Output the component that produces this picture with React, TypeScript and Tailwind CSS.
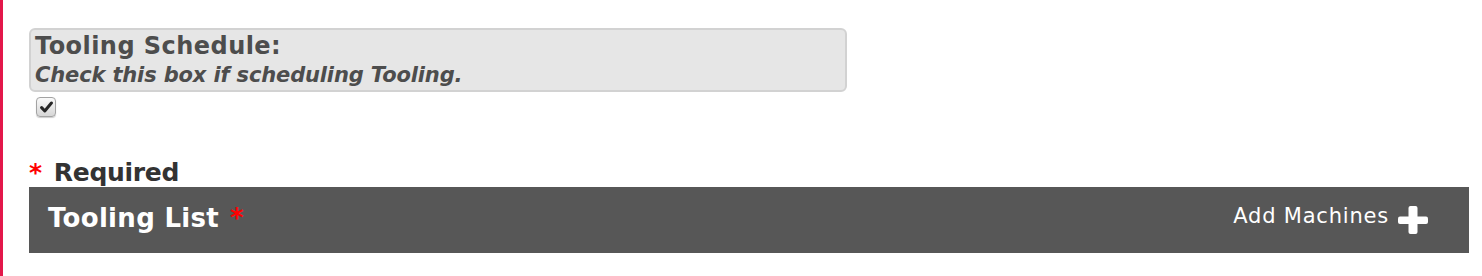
import { useState } from "react";

const PlusIcon = () => (
  <svg width="30" height="28" viewBox="0 0 30 28" className="block">
    <rect x="0" y="10.5" width="30" height="7.5" rx="2" fill="#ffffff" />
    <rect x="10.5" y="0" width="9" height="28" rx="2" fill="#ffffff" />
  </svg>
);

const App = () => {
  const [checked, setChecked] = useState(true);

  return (
    <div className="min-h-[276px] border-l-[3px] border-[#e3174a] bg-white pl-[26px] pr-[13px] pt-[28px] font-['DejaVu_Sans','Verdana',sans-serif]">
      {/* Tooling Schedule */}
      <div className="w-[818px] rounded-[6px] border-2 border-[#d2d2d2] bg-[#e6e6e6] px-[4px] pt-[2px] text-[#4d4d4d]">
        <p className="text-[24px] font-bold leading-[29px] tracking-[0.45px]">Tooling Schedule:</p>
        <p className="text-[21px] font-bold italic leading-[29px] tracking-[-0.15px]">
          Check this box if scheduling Tooling.
        </p>
      </div>
      <button
        type="button"
        onClick={() => setChecked(!checked)}
        className="ml-[7px] mt-[5px] flex h-[20px] w-[20px] items-center justify-center rounded-[4px] border border-[#a3a3a3] bg-gradient-to-b from-[#fafafa] to-[#d6d6d6] shadow-[0_1px_1px_rgba(0,0,0,0.2)]"
      >
        {checked && (
          <svg width="13" height="12" viewBox="0 0 13 12">
            <path d="M1.6 6.6 L4.8 10 L11.4 2" fill="none" stroke="#262626" strokeWidth="3" strokeLinecap="round" strokeLinejoin="round" />
          </svg>
        )}
      </button>

      {/* Required note */}
      <div className="mt-[42px] flex items-baseline text-[25px] font-bold leading-[28px] tracking-[-0.3px] text-[#333333]">
        <span className="mr-[12px] text-[#ff0000]">*</span>
        <span>Required</span>
      </div>

      {/* Tooling List bar */}
      <div className="flex h-[66px] items-center justify-between bg-[#575757] pl-[19px] pr-[41px]">
        <div className="mb-[4px] flex items-baseline text-[26px] font-bold leading-[30px] tracking-[0.3px] text-white">
          <span>Tooling List</span>
          <span className="ml-[11px] text-[#ff0000]">*</span>
        </div>
        <button type="button" className="flex items-center gap-[9px] text-white">
          <span className="mb-[7px] text-[21px] tracking-[0.8px]">Add Machines</span>
          <PlusIcon />
        </button>
      </div>
    </div>
  );
};

export default App;
